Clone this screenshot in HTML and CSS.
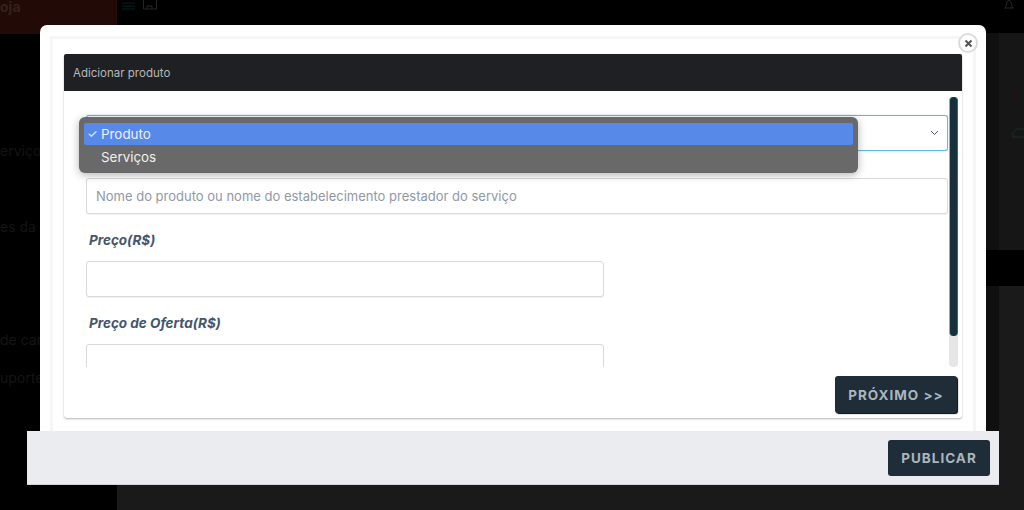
FILE: index.html
```html
<!DOCTYPE html>
<html lang="pt">
<head>
<meta charset="utf-8">
<title>Adicionar produto</title>
<link rel="stylesheet" href="styles.css">
</head>
<body>
<div class="app">
  <aside class="side">
    <div class="brand">oja</div>
    <ul class="side-nav">
      <li class="n1">erviços</li>
      <li class="n2">es da</li>
      <li class="n3">de can</li>
      <li class="n4">uporte</li>
    </ul>
  </aside>
  <main class="main">
    <header class="top">
      <svg class="ic-menu" width="13" height="8" viewBox="0 0 13 8"><path d="M0 1h13M0 4h13M0 7h13" stroke="#0b2028" stroke-width="1.2"/></svg>
      <svg class="ic-store" width="16" height="10" viewBox="0 0 16 10"><path d="M1.500 0v9h13V0M5 9V6h5v3" fill="none" stroke="#262626" stroke-width="1"/></svg>
      <svg class="ic-bell" width="12" height="9" viewBox="0 0 12 9"><path d="M1 8h10M2.500 8c1-2 .5-6 3.500-8 3 2 2.500 6 3.500 8" fill="none" stroke="#262626"/></svg>
    </header>
    <div class="content">
      <div class="stat">
        <span class="zero">0</span>
        <svg class="ic-tag" width="12" height="10" viewBox="0 0 12 10"><path d="M0 9h12M1 9V5l3-4h8" fill="none" stroke="#123028"/></svg>
      </div>
      <div class="band"></div>
    </div>
  </main>
</div>

<section class="modal">
  <span class="close">
    <svg width="9" height="9" viewBox="0 0 9 9"><path d="M1.500 1.500l6 6M7.500 1.500l-6 6" stroke="#555" stroke-width="2"/></svg>
  </span>
  <div class="modal-inner">
    <div class="card">
      <div class="card-head">Adicionar produto</div>
      <div class="card-body">
        <div class="scroll">
          <div class="fake-select">
            <svg width="9" height="6" viewBox="0 0 9 6"><path d="M1 1l3.500 3.500L8 1" fill="none" stroke="#4a5568" stroke-width="1"/></svg>
          </div>
          <input class="field field-full" type="text" placeholder="Nome do produto ou nome do estabelecimento prestador do serviço">
          <label class="lab">Preço(R$)</label>
          <input class="field field-half" type="text">
          <label class="lab">Preço de Oferta(R$)</label>
          <input class="field field-half" type="text">
          <div class="bar"><div class="thumb"></div></div>
        </div>
        <div class="card-foot"><button class="btn btn-next">PRÓXIMO &gt;&gt;</button></div>
      </div>
    </div>
  </div>
</section>

<div class="menu">
  <div class="opt opt-on"><span class="tick">✓</span>Produto</div>
  <div class="opt">Serviços</div>
</div>

<footer class="foot">
  <button class="btn btn-pub">PUBLICAR</button>
</footer>
</body>
</html>
```
FILE: styles.css
```css
* { box-sizing: border-box; }
html, body { margin: 0; height: 510px; overflow: hidden; }
body { background: #1a1a1a; font-family: Inter, "Liberation Sans", sans-serif; }

.app { display: grid; grid-template-columns: 117px 1fr; height: 510px; }
.side { background: #000; color: #141414; font-size: 14px; overflow: hidden; }
.brand { height: 34px; background: #220a06; color: #36211c; font-weight: 700; font-size: 14px; line-height: 14px; }
.side-nav { list-style: none; margin: 0; padding: 0; }
.side-nav li { height: 20px; line-height: 20px; white-space: nowrap; }
.n1 { margin-top: 107px; }
.n2 { margin-top: 56px; }
.n3 { margin-top: 93px; }
.n4 { margin-top: 18px; }

.main { background: #1a1a1a; display: flex; flex-direction: column; }
.top { height: 33px; background: #000; display: flex; align-items: flex-start; padding: 0 9px 0 5px; gap: 7px; }
.ic-menu { margin-top: 2px; }
.ic-bell { margin-left: auto; }
.content { flex: 1; display: flex; flex-direction: column; align-items: flex-end; background: linear-gradient(to right, transparent 869px, #101010 869px, #101010 882px, transparent 882px) no-repeat; background-size: 100% 452px; }
.stat { height: 217px; width: 25px; padding: 55px 0 0 13px; display: flex; flex-direction: column; gap: 25px; background: #161616; }
.zero { color: #2c0e0e; font-size: 13px; line-height: 15px; }
.band { align-self: stretch; height: 36px; background: #000; }

.modal { position: absolute; left: 40px; top: 25px; width: 946px; height: 407px; background: #fff; border-radius: 7px 7px 0 0; padding: 11px 10px 0; }
.close { position: absolute; left: 918px; top: 8px; width: 20px; height: 20px; border-radius: 50%; background: #fff; border: 2px solid #dcdcdc; display: flex; align-items: center; justify-content: center; }
.modal-inner { height: 396px; background: #fff; border: solid #f6f6f6; border-width: 3px 3px 0; padding: 15px 11px 0; }
.card { width: 898px; height: 364px; background: #fff; border-radius: 3px; box-shadow: 0 1px 2px rgba(0,0,0,.3); display: flex; flex-direction: column; }
.card-head { height: 37px; background: #1f2024; color: #b8b8b8; font-size: 11.500px; line-height: 38px; padding-left: 9px; border-radius: 2px 2px 0 0; }
.card-body { flex: 1; display: flex; flex-direction: column; }

.scroll { position: relative; height: 276px; overflow: hidden; padding: 24px 14px 0 22px; }
.fake-select { height: 36px; width: 862px; border: 1px solid #58bedd; border-radius: 3px; background: #fff; box-shadow: 0 0 1px #58bedd; display: flex; align-items: center; justify-content: flex-end; padding-right: 8px; margin-bottom: 27px; }
.field { display: block; height: 36px; background: #fff; border: 1px solid #dadada; border-radius: 3px; padding: 0 9px; font: 13px Inter, "Liberation Sans", sans-serif; box-shadow: 0 1px 1px rgba(0,0,0,.06); }
.field::placeholder { color: #8f99a5; opacity: 1; }
.field-full { width: 862px; }
.field-half { width: 518px; }
.lab { display: block; margin: 18px 0 12px 3px; height: 17px; line-height: 17px; font-size: 13.500px; font-weight: 700; font-style: italic; color: #45566b; }

.bar { position: absolute; left: 885px; top: 6px; width: 9px; height: 270px; background: #e6e6e6; border-radius: 4px; }
.thumb { height: 239px; background: #17303d; border-radius: 4px; border-left: 1px solid #5cc0de; border-right: 1px solid #2c6a80; }

.card-foot { display: flex; justify-content: flex-end; padding: 9px 5px 0 0; }
.btn { border: 0; background: #1f2d38; color: #a9b6bf; font: 700 13.500px Inter, "Liberation Sans", sans-serif; letter-spacing: 1px; border-radius: 3px; }
.btn-next { width: 122px; height: 37px; box-shadow: 1px 1px 1px #000; }
.btn-pub { width: 102px; height: 36px; }

.menu { position: absolute; left: 79px; top: 117px; width: 779px; height: 56px; padding: 6px 5px; background: #696969; border-radius: 6px; box-shadow: 0 2px 8px rgba(0,0,0,.3); color: #f0f0f0; font-size: 13.400px; }
.opt { height: 22px; line-height: 22px; padding-left: 17px; position: relative; border-radius: 2px; }
.opt + .opt { margin-top: 1px; }
.opt-on { background: #5689e8; }
.tick { position: absolute; left: 3px; font-size: 12px; }

.foot { position: absolute; left: 27px; top: 431px; width: 972px; height: 54px; background: #ebecf0; border-bottom: 1px solid #d4d4d8; display: flex; justify-content: flex-end; align-items: flex-start; padding: 9px 9px 0 0; }
```
